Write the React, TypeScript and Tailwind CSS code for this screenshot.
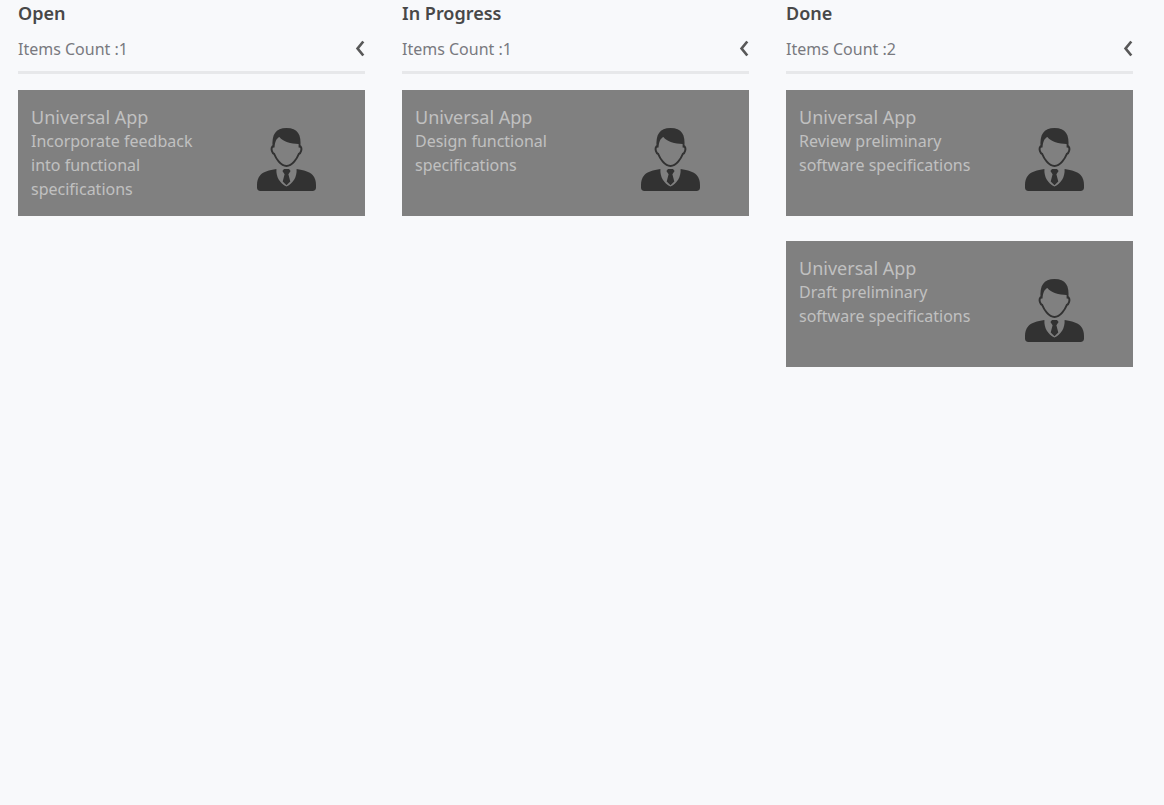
type Task = { id: number; title: string; description: string };
type Column = { name: string; tasks: Task[] };

const columns: Column[] = [
  {
    name: "Open",
    tasks: [
      { id: 1, title: "Universal App", description: "Incorporate feedback into functional specifications" },
    ],
  },
  {
    name: "In Progress",
    tasks: [{ id: 2, title: "Universal App", description: "Design functional specifications" }],
  },
  {
    name: "Done",
    tasks: [
      { id: 3, title: "Universal App", description: "Review preliminary software specifications" },
      { id: 4, title: "Universal App", description: "Draft preliminary software specifications" },
    ],
  },
];

function Avatar() {
  return (
    <svg viewBox="0 0 60 64" className="h-16 w-[60px] shrink-0" aria-hidden="true">
      {/* head outline with ears */}
      <path
        d="M16.6 19C14.6 19.5 14.2 21.5 14.9 24C15.4 25.7 16.2 26.6 17.2 27C19 31.5 23.6 38.9 29.5 38.9C35.4 38.9 40 31.5 41.8 27C42.8 26.6 43.6 25.7 44.1 24C44.8 21.5 44.4 19.5 42.4 19"
        fill="none"
        stroke="#323232"
        strokeWidth="2"
      />
      {/* hair */}
      <path
        d="M15.6 20.5C14.6 7.5 18.5 1 29.5 1C40.8 1 44.6 7.5 43.4 20.5H41.6L41.6 16.9C34 16.8 26 14.8 22.4 10C19.5 11.4 17.9 14.5 17.5 20.5Z"
        fill="#323232"
      />
      {/* suit */}
      <path
        d="M19.4 42C12 43.3 6.6 44.6 3.4 48C.8 50.8 0 54.3 0 58V60.5C0 62.8 1.2 64 3.5 64H55.5C57.8 64 59 62.8 59 60.5V58C59 54.3 58.2 50.8 55.6 48C52.4 44.6 47 43.3 39.6 42C40 50 36.4 56 29.5 59.6C22.6 56 19 50 19.4 42Z"
        fill="#323232"
      />
      {/* tie */}
      <path
        d="M27 42H32L33.6 44L31.4 47.3L33.3 54.4L29.5 58.2L25.7 54.4L27.6 47.3L25.4 44Z"
        fill="#323232"
      />
    </svg>
  );
}

function Card({ task }: { task: Task }) {
  return (
    <article className="flex min-h-[126px] items-start justify-between bg-[#808080] pt-[15px] pr-12 pb-[15px] pl-[13px] text-[#c0c0c0]">
      <div className="max-w-[190px]">
        <h3 className="text-lg leading-6">{task.title}</h3>
        <p className="text-base leading-6">{task.description}</p>
      </div>
      <div className="pt-[22px]">
        <Avatar />
      </div>
    </article>
  );
}

function BoardColumn({ column }: { column: Column }) {
  return (
    <section>
      <header className="border-b-[3px] border-[#e7e8ea]">
        <h2 className="text-lg leading-[26px] font-semibold text-[#484848]">{column.name}</h2>
        <div className="flex items-center justify-between pt-[11px] pb-[10px]">
          <p className="text-base leading-6 text-[#79797f]">Items Count :{column.tasks.length}</p>
          <button type="button" aria-label={`Collapse ${column.name}`} className="flex">
            <svg viewBox="0 0 10 18" className="h-[18px] w-[10px]" aria-hidden="true">
              <path d="M8.3 1.5L2.6 8.5L8.3 15.5" fill="none" stroke="#585858" strokeWidth="2.7" />
            </svg>
          </button>
        </div>
      </header>
      <div className="flex flex-col gap-[25px] pt-4">
        {column.tasks.map((task) => (
          <Card key={task.id} task={task} />
        ))}
      </div>
    </section>
  );
}

export default function App() {
  return (
    <main className="grid min-h-screen grid-cols-3 gap-[37px] bg-[#f8f9fb] pr-[31px] pl-[18px] font-['Noto_Sans','Open_Sans',sans-serif]">
      {columns.map((column) => (
        <BoardColumn key={column.name} column={column} />
      ))}
    </main>
  );
}
